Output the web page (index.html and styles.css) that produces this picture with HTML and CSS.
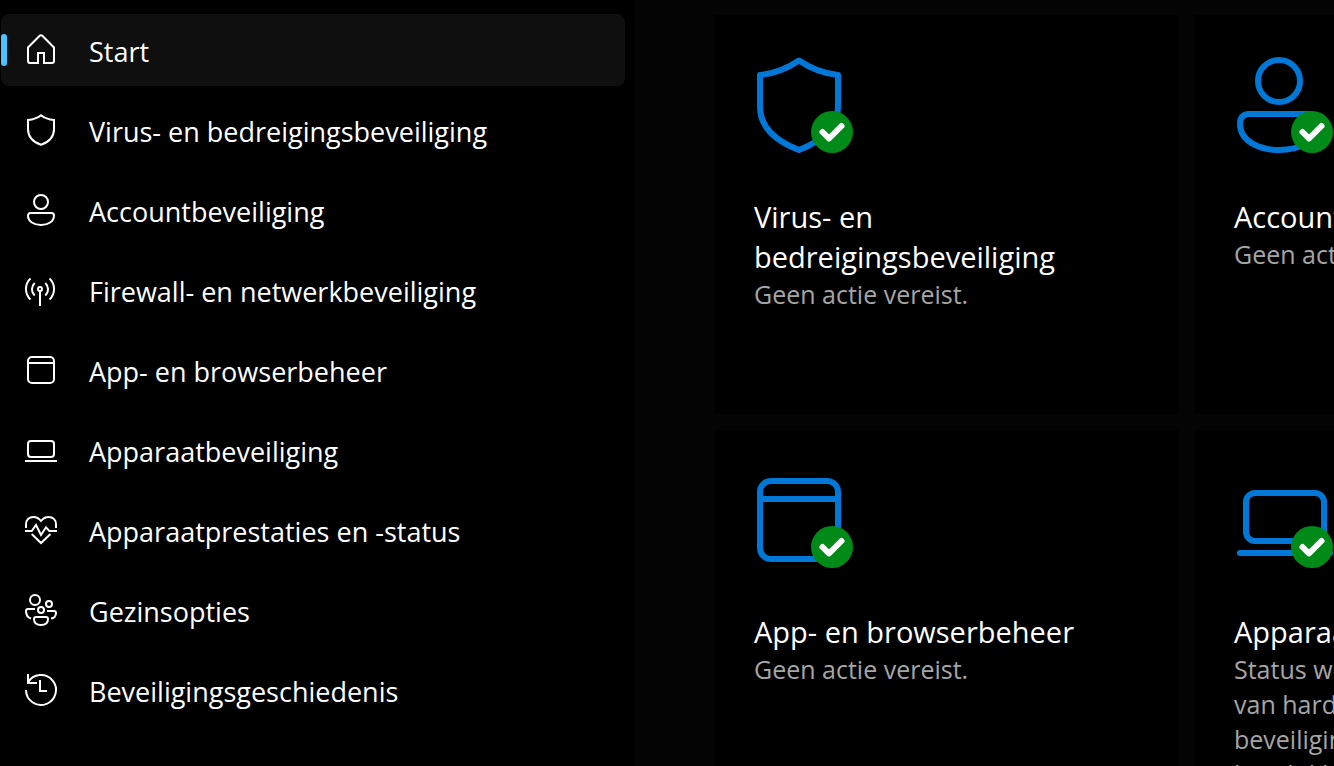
FILE: index.html
```html
<!DOCTYPE html>
<html lang="nl">
<head>
<meta charset="utf-8">
<title>Windows-beveiliging</title>
<link rel="stylesheet" href="styles.css">
</head>
<body>
<div class="app">
  <nav class="sidebar">
    <a class="nav-item active" href="#start" aria-current="page">
      <svg class="nav-icon" viewBox="0 0 32 32"><path d="M3 13.5 14.7 1.8a1.8 1.8 0 0 1 2.6 0L29 13.5V27a2 2 0 0 1-2 2H19V19H13V29H5a2 2 0 0 1-2-2z"/></svg>
      <span>Start</span>
    </a>
    <a class="nav-item" href="#virus">
      <svg class="nav-icon" viewBox="0 0 32 32"><path d="M16 1.2C12.5 4 8 5.5 3 6V15C3 22.5 8 28 16 30.8C24 28 29 22.5 29 15V6C24 5.5 19.5 4 16 1.2z"/></svg>
      <span>Virus- en bedreigingsbeveiliging</span>
    </a>
    <a class="nav-item" href="#account">
      <svg class="nav-icon" viewBox="0 0 32 32"><circle cx="16" cy="8" r="7"/><path d="M5.5 19h21a2.5 2.5 0 0 1 2.5 2.5C29 27.5 23 31 16 31S3 27.5 3 21.5A2.5 2.5 0 0 1 5.5 19z"/></svg>
      <span>Accountbeveiliging</span>
    </a>
    <a class="nav-item" href="#firewall">
      <svg class="nav-icon" viewBox="0 0 32 32"><circle cx="15" cy="15" r="2"/><path d="M15 17V32M5.5 4.500C-.5 10-.5 20 5.500 25.500M24.500 4.500C30.500 10 30.500 20 24.500 25.500M9.700 9C6 12.500 6 18 9.700 21.500M20.300 9C24 12.500 24 18 20.300 21.500"/></svg>
      <span>Firewall- en netwerkbeveiliging</span>
    </a>
    <a class="nav-item" href="#app">
      <svg class="nav-icon" viewBox="0 0 32 32"><rect x="3" y="3" width="26" height="26" rx="4"/><path d="M3 9H29"/></svg>
      <span>App- en browserbeheer</span>
    </a>
    <a class="nav-item" href="#apparaat">
      <svg class="nav-icon" viewBox="0 0 32 32"><rect x="3" y="7" width="26" height="16" rx="3"/><path d="M0 27H32"/></svg>
      <span>Apparaatbeveiliging</span>
    </a>
    <a class="nav-item" href="#prestaties">
      <svg class="nav-icon" viewBox="0 0 32 32"><path d="M1 14V10.500C1 6 4 3 8.500 3C12 3 14 4.500 16 7C18 4.500 20 3 23.500 3C28 3 31 6 31 10.500V14M0 17H6.700L11 11 16 21 21 13.300 24.300 17H32M6.700 20 16 29 25.500 20"/></svg>
      <span>Apparaatprestaties en -status</span>
    </a>
    <a class="nav-item" href="#gezin">
      <svg class="nav-icon" viewBox="0 0 32 32"><circle cx="10" cy="6" r="5"/><circle cx="24" cy="10" r="3"/><circle cx="16" cy="16" r="3"/><path d="M10 15H3a2 2 0 0 0-2 2C1 21 2.500 23.500 6 24.500M22 17H29a2 2 0 0 1 2 2C31 22 29 24.300 26 24.500M11 23H21a2 2 0 0 1 2 2C23 29 20 31 16 31S9 29 9 25a2 2 0 0 1 2-2z"/></svg>
      <span>Gezinsopties</span>
    </a>
    <a class="nav-item" href="#geschiedenis">
      <svg class="nav-icon" viewBox="0 0 32 32"><path d="M1 16A15 15 0 1 0 3 8.500M3 0V9H12M15 6V17H22"/></svg>
      <span>Beveiligingsgeschiedenis</span>
    </a>
  </nav>

  <main class="content">
    <a class="card" href="#virus">
      <svg class="card-icon" viewBox="0 0 100 96"><path d="M45 3.500C34 11 21 16.500 6 18V50C6 71 22 84 45 93C68 84 84 71 84 50V18C69 16.500 56 11 45 3.500z"/><circle class="badge" cx="78" cy="75" r="21"/><path class="check" d="M68.500 75 75 81.500 87.500 69"/></svg>
      <span class="card-title">Virus- en bedreigingsbeveiliging</span>
      <span class="card-text">Geen actie vereist.</span>
    </a>
    <a class="card" href="#account">
      <svg class="card-icon" viewBox="0 0 100 96"><circle cx="45" cy="24" r="21"/><path d="M14 57H76Q84 58 84 67C84 84 65 93 45 93S6 84 6 67Q6 58 14 57z"/><circle class="badge" cx="78" cy="75" r="21"/><path class="check" d="M68.500 75 75 81.500 87.500 69"/></svg>
      <span class="card-title">Accountbeveiliging</span>
      <span class="card-text">Geen actie vereist.</span>
    </a>
    <a class="card" href="#app">
      <svg class="card-icon" viewBox="0 0 100 96"><rect x="6" y="9" width="78" height="78" rx="11"/><path d="M6 27H84"/><circle class="badge" cx="78" cy="75" r="21"/><path class="check" d="M68.500 75 75 81.500 87.500 69"/></svg>
      <span class="card-title">App- en browserbeheer</span>
      <span class="card-text">Geen actie vereist.</span>
    </a>
    <a class="card" href="#apparaat">
      <svg class="card-icon" viewBox="0 0 100 96"><rect x="12" y="21" width="78" height="48" rx="9"/><path d="M6 81H96"/><circle class="badge" cx="78" cy="75" r="21"/><path class="check" d="M68.500 75 75 81.500 87.500 69"/></svg>
      <span class="card-title">Apparaatbeveiliging</span>
      <span class="card-text">Status weergeven en beheren<br>van hardware-<br>beveiligingsfuncties<br>beschikbaar op uw apparaat.</span>
    </a>
  </main>
</div>
</body>
</html>
```
FILE: styles.css
```css
* {
  box-sizing: border-box;
}

body {
  margin: 0;
  background: #040404;
  color: #fff;
  font-family: "Open Sans", "Noto Sans", sans-serif;
}

a {
  color: inherit;
  text-decoration: none;
}

.app {
  display: flex;
  height: 100vh;
  overflow: hidden;
}

.sidebar {
  display: flex;
  flex: 0 0 635px;
  flex-direction: column;
  gap: 8px;
  padding: 14px 10px 14px 1px;
  background: #000;
}

.nav-item {
  display: flex;
  flex-shrink: 0;
  align-items: center;
  gap: 32px;
  height: 72px;
  padding-left: 24px;
  border-radius: 8px;
  font-size: 27px;
  line-height: 36px;
}

.nav-item span {
  padding-top: 4px;
}

.active {
  position: relative;
  background: #0f0f0f;
}

.active::before {
  position: absolute;
  top: 20px;
  left: 0;
  width: 6px;
  height: 32px;
  border-radius: 3px;
  background: #4cc2ff;
  content: "";
}

.nav-icon {
  flex: none;
  width: 32px;
  height: 32px;
  overflow: visible;
  fill: none;
  stroke: #fff;
  stroke-width: 2;
}

.content {
  display: grid;
  flex: 1;
  grid-template-columns: repeat(2, 464px);
  grid-auto-rows: minmax(399px, max-content);
  gap: 16px;
  min-width: 0;
  padding: 15px 0 0 80px;
  overflow: hidden;
}

.card {
  display: flex;
  flex-direction: column;
  padding: 42px 39px;
  background: #000;
}

.card-icon {
  flex: none;
  width: 100px;
  height: 96px;
  margin-bottom: 44px;
  overflow: visible;
  fill: none;
  stroke: #0078d7;
  stroke-width: 6;
  stroke-linecap: round;
  stroke-linejoin: round;
}

.badge {
  fill: #008a17;
  stroke: none;
}

.check {
  stroke: #fff;
}

.card-title {
  font-size: 29px;
  line-height: 40px;
}

.card-text {
  color: #a6a6a6;
  font-size: 25px;
  line-height: 35px;
}
```
